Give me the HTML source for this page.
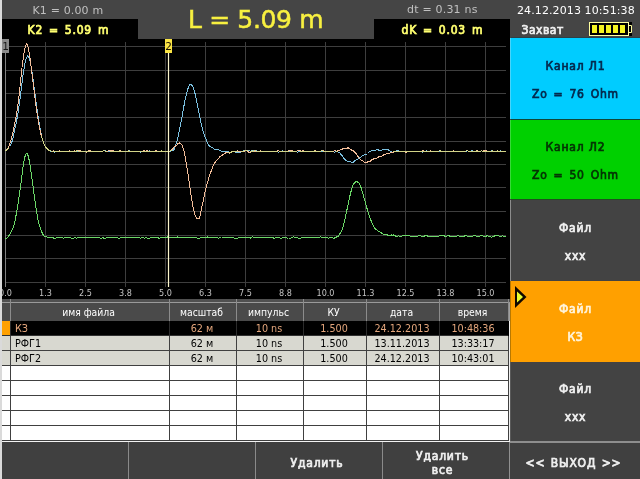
<!DOCTYPE html>
<html lang="ru"><head><meta charset="utf-8"><title>Рефлектометр</title>
<style>
html,body{margin:0;padding:0;}
body{-webkit-font-smoothing:antialiased;width:640px;height:479px;overflow:hidden;background:#454545;position:relative;font-family:"DejaVu Sans","Liberation Sans",sans-serif;}
div{position:absolute;white-space:nowrap;}
.strip{left:0;top:0;width:2px;height:479px;background:#dadada;z-index:5;}
.blk{background:#000;}
.k1{left:32.5px;top:3px;font-size:11px;line-height:16px;color:#c0c0c0;letter-spacing:0.15px;}
.k2{left:27.5px;top:22px;font-size:12px;line-height:16px;color:#ffff70;font-weight:normal;-webkit-text-stroke:0.7px;letter-spacing:0.8px;word-spacing:1.7px;font-family:"DejaVu Sans Condensed","DejaVu Sans","Liberation Sans",sans-serif;}
.big{left:188px;top:5px;font-size:25px;line-height:30px;color:#f8f040;letter-spacing:-0.35px;-webkit-text-stroke:0.5px;}
.dt{left:407px;top:2px;font-size:11px;line-height:16px;color:#c0c0c0;letter-spacing:0.2px;}
.dk{left:401.5px;top:22px;font-size:12px;line-height:16px;color:#ffff70;font-weight:normal;-webkit-text-stroke:0.7px;letter-spacing:0.8px;word-spacing:1.7px;font-family:"DejaVu Sans Condensed","DejaVu Sans","Liberation Sans",sans-serif;}
.date{left:517px;top:3px;font-size:11px;line-height:16px;color:#ffffff;letter-spacing:0.1px;}
.zah{left:521.5px;top:22px;font-size:12px;line-height:16px;color:#f0f0f0;font-weight:normal;-webkit-text-stroke:0.7px;letter-spacing:0.5px;font-family:"DejaVu Sans Condensed","DejaVu Sans","Liberation Sans",sans-serif;}
.ax{top:287px;font-size:9px;line-height:12px;color:#c4c4c4;text-align:center;font-family:"DejaVu Sans Condensed","DejaVu Sans","Liberation Sans",sans-serif;}
.btn{left:511px;width:129px;text-align:center;font-weight:normal;-webkit-text-stroke:0.7px;font-size:12px;line-height:16px;letter-spacing:0.8px;word-spacing:1.7px;font-family:"DejaVu Sans Condensed","DejaVu Sans","Liberation Sans",sans-serif;}
.btn span{position:absolute;left:0;width:129px;}
.th{top:303px;height:18px;line-height:18px;font-size:10.3px;color:#ffffff;text-align:center;font-family:"DejaVu Sans Condensed","DejaVu Sans","Liberation Sans",sans-serif;}
.td{height:15px;line-height:15px;font-size:10.7px;color:#000;text-align:center;font-family:"DejaVu Sans Condensed","DejaVu Sans","Liberation Sans",sans-serif;}
.td.sel{color:#e4a67c;}
.bb{top:443px;height:36px;color:#f0f0f0;font-weight:normal;-webkit-text-stroke:0.7px;letter-spacing:0.8px;font-size:12px;text-align:center;font-family:"DejaVu Sans Condensed","DejaVu Sans","Liberation Sans",sans-serif;}
</style></head><body>
<div id="root" style="left:0;top:0;width:640px;height:479px;will-change:transform">
<div class="strip"></div>

<!-- header -->
<div class="k1">K1 = 0.00 m</div>
<div class="blk" style="left:2px;top:19px;width:136px;height:21px"></div>
<div class="k2">K2 = 5.09 m</div>
<div class="big">L = 5.09 m</div>
<div class="dt">dt = 0.31 ns</div>
<div class="blk" style="left:374px;top:19px;width:136px;height:21px"></div>
<div class="dk">dK = 0.03 m</div>
<div class="date">24.12.2013 10:51:38</div>
<div class="zah">Захват</div>
<svg style="position:absolute;left:585px;top:18px" width="50" height="22" viewBox="585 18 50 22">
 <rect x="628" y="22" width="4" height="14" fill="#000"/>
 <rect x="589.5" y="22.5" width="39" height="13" fill="#000" stroke="#ffffa0" stroke-width="1"/>
 <path d="M628.5 25.5H631.5V32.5H628.5" fill="none" stroke="#ffffa0" stroke-width="1"/>
 <g fill="#f4f420"><rect x="592" y="25" width="5" height="8"/><rect x="599" y="25" width="5" height="8"/><rect x="606" y="25" width="5" height="8"/><rect x="613" y="25" width="5" height="8"/><rect x="620" y="25" width="5" height="8"/></g>
</svg>

<!-- graph -->
<div class="blk" style="left:2px;top:39px;width:508px;height:260px"></div>
<svg style="position:absolute;left:0;top:0" width="640" height="479" viewBox="0 0 640 479">
 <g stroke="#3e3e3e" stroke-width="1" shape-rendering="crispEdges"><line x1="5.5" y1="42" x2="5.5" y2="287"/><line x1="45.5" y1="42" x2="45.5" y2="287"/><line x1="85.5" y1="42" x2="85.5" y2="287"/><line x1="125.5" y1="42" x2="125.5" y2="287"/><line x1="165.5" y1="42" x2="165.5" y2="287"/><line x1="205.5" y1="42" x2="205.5" y2="287"/><line x1="245.5" y1="42" x2="245.5" y2="287"/><line x1="285.5" y1="42" x2="285.5" y2="287"/><line x1="325.5" y1="42" x2="325.5" y2="287"/><line x1="365.5" y1="42" x2="365.5" y2="287"/><line x1="405.5" y1="42" x2="405.5" y2="287"/><line x1="445.5" y1="42" x2="445.5" y2="287"/><line x1="485.5" y1="42" x2="485.5" y2="287"/><line x1="5" y1="46.5" x2="506" y2="46.5"/><line x1="5" y1="70.5" x2="506" y2="70.5"/><line x1="5" y1="93.5" x2="506" y2="93.5"/><line x1="5" y1="117.5" x2="506" y2="117.5"/><line x1="5" y1="141.5" x2="506" y2="141.5"/><line x1="5" y1="164.5" x2="506" y2="164.5"/><line x1="5" y1="187.5" x2="506" y2="187.5"/><line x1="5" y1="211.5" x2="506" y2="211.5"/><line x1="5" y1="235.5" x2="506" y2="235.5"/><line x1="5" y1="258.5" x2="506" y2="258.5"/><line x1="5" y1="282.5" x2="506" y2="282.5"/></g>
 <line x1="5.5" y1="53" x2="5.5" y2="287" stroke="#808080" stroke-width="1" shape-rendering="crispEdges"/>
 <g fill="none" stroke-width="1" stroke-linejoin="round" shape-rendering="crispEdges">
  <polyline stroke="#7cc2e2" points="5.5,151.0 6.5,150.7 7.5,149.7 8.5,148.2 9.5,146.5 10.5,144.7 11.5,143.0 12.5,140.1 13.5,135.5 14.5,130.7 15.5,126.3 16.5,121.4 17.5,115.9 18.5,109.8 19.5,103.3 20.5,95.6 21.5,87.5 22.5,79.3 23.5,71.8 24.5,65.6 25.5,60.3 26.5,57.5 27.5,55.9 28.5,56.4 29.5,59.3 30.5,62.8 31.5,68.4 32.5,75.5 33.5,83.2 34.5,90.8 35.5,97.9 36.5,105.3 37.5,112.5 38.5,119.3 39.5,125.5 40.5,130.9 41.5,136.0 42.5,139.9 43.5,142.6 44.5,144.9 45.5,147.0 46.5,148.2 47.5,149.1 48.5,150.3 49.5,151.0 50.5,151.0 51.5,151.3 52.5,151.4 53.5,151.6 54.5,152.1 55.5,151.8 56.5,151.3 57.5,151.4 58.5,151.6 59.5,151.6 60.5,151.7 61.5,151.7 62.5,151.9 63.5,151.9 64.5,151.5 65.5,151.4 66.5,151.4 67.5,151.3 68.5,151.1 69.5,151.2 70.5,151.5 71.5,151.9 72.5,151.8 73.5,151.2 74.5,151.2 75.5,151.3 76.5,151.0 77.5,151.1 78.5,151.6 79.5,151.9 80.5,151.8 81.5,151.5 82.5,151.3 83.5,151.6 84.5,151.8 85.5,151.6 86.5,151.4 87.5,151.5 88.5,151.5 89.5,151.3 90.5,151.2 91.5,151.3 92.5,151.5 93.5,151.8 94.5,151.8 95.5,151.7 96.5,151.6 97.5,151.6 98.5,151.7 99.5,151.7 100.5,151.5 101.5,151.3 102.5,151.2 103.5,150.8 104.5,150.7 105.5,151.0 106.5,151.2 107.5,151.7 108.5,152.0 109.5,151.5 110.5,151.2 111.5,151.5 112.5,151.6 113.5,151.5 114.5,151.5 115.5,151.7 116.5,151.6 117.5,151.3 118.5,151.3 119.5,151.4 120.5,151.3 121.5,151.3 122.5,151.4 123.5,151.7 124.5,151.7 125.5,151.5 126.5,151.3 127.5,151.1 128.5,150.8 129.5,151.0 130.5,151.2 131.5,151.1 132.5,151.2 133.5,151.2 134.5,151.4 135.5,151.5 136.5,151.6 137.5,151.4 138.5,151.3 139.5,151.8 140.5,152.1 141.5,151.6 142.5,151.4 143.5,151.3 144.5,151.4 145.5,151.6 146.5,151.5 147.5,151.3 148.5,151.2 149.5,151.0 150.5,151.2 151.5,151.6 152.5,151.8 153.5,151.7 154.5,151.5 155.5,151.3 156.5,151.2 157.5,151.3 158.5,151.4 159.5,151.4 160.5,151.2 161.5,151.0 162.5,151.3 163.5,151.8 164.5,151.4 165.5,151.2 166.5,151.6 167.5,151.7 168.5,151.3 169.5,151.2 170.5,151.0 171.5,150.8 172.5,150.9 173.5,150.5 174.5,148.8 175.5,145.9 176.5,142.6 177.5,139.1 178.5,134.8 179.5,129.9 180.5,125.1 181.5,119.8 182.5,113.8 183.5,108.3 184.5,103.0 185.5,97.9 186.5,93.9 187.5,90.2 188.5,87.0 189.5,85.1 190.5,84.2 191.5,84.8 192.5,86.4 193.5,88.3 194.5,91.3 195.5,95.5 196.5,100.4 197.5,105.7 198.5,110.7 199.5,115.7 200.5,120.8 201.5,125.4 202.5,129.2 203.5,132.8 204.5,135.9 205.5,138.2 206.5,140.5 207.5,142.7 208.5,144.6 209.5,146.3 210.5,147.0 211.5,147.0 212.5,147.6 213.5,148.6 214.5,149.1 215.5,149.7 216.5,150.0 217.5,149.7 218.5,149.8 219.5,150.6 220.5,151.0 221.5,151.1 222.5,151.2 223.5,151.1 224.5,151.1 225.5,151.4 226.5,151.4 227.5,151.5 228.5,152.0 229.5,152.3 230.5,152.2 231.5,152.0 232.5,151.8 233.5,151.8 234.5,151.9 235.5,152.1 236.5,152.1 237.5,152.2 238.5,152.5 239.5,152.4 240.5,152.0 241.5,151.8 242.5,151.6 243.5,151.0 244.5,150.4 245.5,150.4 246.5,150.6 247.5,150.6 248.5,150.6 249.5,150.8 250.5,151.2 251.5,150.9 252.5,150.6 253.5,150.6 254.5,150.4 255.5,150.3 256.5,151.1 257.5,151.8 258.5,151.5 259.5,151.1 260.5,151.2 261.5,151.7 262.5,151.7 263.5,151.5 264.5,151.5 265.5,151.6 266.5,151.8 267.5,151.8 268.5,151.5 269.5,151.3 270.5,151.4 271.5,151.5 272.5,151.5 273.5,151.3 274.5,151.3 275.5,151.3 276.5,151.4 277.5,152.0 278.5,152.1 279.5,151.7 280.5,151.7 281.5,151.4 282.5,150.9 283.5,151.2 284.5,151.5 285.5,151.4 286.5,151.2 287.5,151.3 288.5,151.6 289.5,151.8 290.5,151.8 291.5,151.8 292.5,151.8 293.5,151.5 294.5,151.1 295.5,151.2 296.5,151.8 297.5,152.1 298.5,152.0 299.5,151.8 300.5,151.7 301.5,151.5 302.5,151.4 303.5,151.4 304.5,151.7 305.5,152.0 306.5,151.9 307.5,151.5 308.5,151.2 309.5,151.5 310.5,151.9 311.5,151.9 312.5,151.5 313.5,151.3 314.5,151.1 315.5,151.4 316.5,151.7 317.5,151.5 318.5,151.4 319.5,151.4 320.5,151.3 321.5,151.0 322.5,151.1 323.5,151.4 324.5,151.5 325.5,151.5 326.5,151.8 327.5,152.0 328.5,151.5 329.5,151.3 330.5,151.5 331.5,151.4 332.5,151.3 333.5,151.8 334.5,152.1 335.5,151.8 336.5,151.6 337.5,151.7 338.5,152.1 339.5,152.6 340.5,153.7 341.5,155.1 342.5,156.1 343.5,157.6 344.5,159.1 345.5,160.0 346.5,160.8 347.5,161.6 348.5,161.7 349.5,161.7 350.5,161.8 351.5,162.3 352.5,162.6 353.5,162.0 354.5,161.0 355.5,160.3 356.5,159.9 357.5,159.4 358.5,158.6 359.5,157.9 360.5,157.2 361.5,156.5 362.5,155.9 363.5,155.3 364.5,154.8 365.5,154.5 366.5,154.3 367.5,153.5 368.5,152.5 369.5,151.8 370.5,151.4 371.5,150.8 372.5,150.6 373.5,151.0 374.5,150.9 375.5,150.2 376.5,149.7 377.5,149.8 378.5,150.0 379.5,150.5 380.5,150.8 381.5,150.3 382.5,149.7 383.5,149.6 384.5,149.8 385.5,149.8 386.5,149.7 387.5,149.7 388.5,150.0 389.5,150.6 390.5,151.1 391.5,151.1 392.5,151.0 393.5,151.1 394.5,151.2 395.5,151.1 396.5,150.9 397.5,150.7 398.5,150.9 399.5,151.3 400.5,151.5 401.5,151.6 402.5,151.5 403.5,151.0 404.5,151.0 405.5,151.5 406.5,151.6 407.5,151.6 408.5,151.8 409.5,151.5 410.5,151.1 411.5,151.2 412.5,151.7 413.5,151.5 414.5,151.2 415.5,151.7 416.5,152.0 417.5,151.9 418.5,151.5 419.5,151.2 420.5,151.5 421.5,152.0 422.5,152.0 423.5,151.8 424.5,151.6 425.5,151.2 426.5,151.0 427.5,151.3 428.5,151.5 429.5,151.4 430.5,151.7 431.5,151.6 432.5,151.2 433.5,151.2 434.5,151.3 435.5,151.3 436.5,151.2 437.5,151.2 438.5,151.2 439.5,151.0 440.5,151.0 441.5,151.4 442.5,151.5 443.5,151.2 444.5,151.2 445.5,151.2 446.5,151.3 447.5,151.5 448.5,151.7 449.5,151.7 450.5,151.5 451.5,151.5 452.5,151.4 453.5,151.3 454.5,151.5 455.5,151.6 456.5,151.6 457.5,151.4 458.5,151.2 459.5,151.3 460.5,151.6 461.5,151.6 462.5,151.4 463.5,151.1 464.5,151.1 465.5,151.3 466.5,151.0 467.5,150.8 468.5,151.4 469.5,151.6 470.5,151.1 471.5,150.9 472.5,151.0 473.5,151.1 474.5,151.3 475.5,151.2 476.5,151.3 477.5,151.5 478.5,151.4 479.5,151.4 480.5,151.1 481.5,150.8 482.5,151.1 483.5,151.7 484.5,151.7 485.5,151.5 486.5,151.5 487.5,151.5 488.5,151.8 489.5,151.9 490.5,151.3 491.5,150.8 492.5,150.8 493.5,151.1 494.5,151.6 495.5,151.7 496.5,151.2 497.5,150.9 498.5,151.4 499.5,151.4 500.5,151.0 501.5,151.1 502.5,151.4 503.5,151.5 504.5,151.3 505.5,151.3"/>
  <polyline stroke="#f4be9a" points="5.5,150.5 6.5,149.9 7.5,149.2 8.5,147.3 9.5,144.6 10.5,141.6 11.5,137.9 12.5,133.9 13.5,129.6 14.5,125.0 15.5,120.0 16.5,114.4 17.5,108.3 18.5,100.4 19.5,91.3 20.5,82.0 21.5,72.0 22.5,63.3 23.5,56.3 24.5,50.4 25.5,46.2 26.5,43.4 27.5,44.5 28.5,48.7 29.5,54.3 30.5,62.3 31.5,70.3 32.5,78.2 33.5,86.2 34.5,94.0 35.5,101.9 36.5,109.3 37.5,115.8 38.5,121.8 39.5,127.6 40.5,132.5 41.5,136.5 42.5,139.7 43.5,142.3 44.5,144.9 45.5,146.9 46.5,148.3 47.5,149.4 48.5,150.1 49.5,150.4 50.5,150.8 51.5,151.1 52.5,151.1 53.5,151.0 54.5,151.2 55.5,151.4 56.5,151.2 57.5,151.2 58.5,151.2 59.5,151.0 60.5,151.2 61.5,151.5 62.5,151.5 63.5,151.4 64.5,151.1 65.5,151.2 66.5,151.5 67.5,151.5 68.5,151.2 69.5,151.0 70.5,151.4 71.5,151.8 72.5,151.8 73.5,151.3 74.5,151.0 75.5,151.3 76.5,151.0 77.5,150.6 78.5,150.9 79.5,150.8 80.5,150.7 81.5,151.1 82.5,151.5 83.5,151.4 84.5,151.6 85.5,152.0 86.5,152.0 87.5,151.5 88.5,151.0 89.5,150.8 90.5,151.0 91.5,151.4 92.5,151.5 93.5,151.5 94.5,151.5 95.5,151.2 96.5,151.3 97.5,151.6 98.5,151.7 99.5,151.7 100.5,151.5 101.5,151.3 102.5,151.2 103.5,150.8 104.5,150.8 105.5,151.2 106.5,151.4 107.5,151.1 108.5,150.8 109.5,150.9 110.5,151.0 111.5,150.7 112.5,150.5 113.5,151.0 114.5,151.6 115.5,151.4 116.5,151.2 117.5,151.3 118.5,151.1 119.5,150.6 120.5,151.0 121.5,151.5 122.5,151.8 123.5,152.0 124.5,151.9 125.5,151.6 126.5,151.5 127.5,151.5 128.5,151.2 129.5,151.3 130.5,151.8 131.5,151.9 132.5,151.5 133.5,151.3 134.5,151.5 135.5,151.7 136.5,151.7 137.5,151.5 138.5,151.2 139.5,151.1 140.5,151.3 141.5,151.6 142.5,151.5 143.5,150.9 144.5,150.9 145.5,151.1 146.5,150.9 147.5,150.9 148.5,151.4 149.5,151.6 150.5,151.4 151.5,151.3 152.5,151.4 153.5,151.5 154.5,151.4 155.5,151.0 156.5,150.9 157.5,151.1 158.5,151.2 159.5,151.3 160.5,151.3 161.5,151.0 162.5,151.1 163.5,151.2 164.5,151.3 165.5,151.1 166.5,151.1 167.5,151.6 168.5,151.9 169.5,151.5 170.5,150.6 171.5,150.0 172.5,149.2 173.5,147.8 174.5,146.6 175.5,146.1 176.5,145.4 177.5,144.2 178.5,143.2 179.5,143.0 180.5,143.5 181.5,144.3 182.5,145.8 183.5,149.2 184.5,153.3 185.5,158.7 186.5,164.8 187.5,170.9 188.5,177.5 189.5,184.5 190.5,191.5 191.5,198.3 192.5,204.2 193.5,209.0 194.5,213.3 195.5,216.4 196.5,217.8 197.5,218.9 198.5,219.0 199.5,217.8 200.5,214.0 201.5,208.6 202.5,204.1 203.5,199.5 204.5,194.3 205.5,190.0 206.5,186.3 207.5,182.5 208.5,178.7 209.5,175.4 210.5,172.9 211.5,170.3 212.5,167.5 213.5,165.1 214.5,163.0 215.5,161.8 216.5,160.7 217.5,159.6 218.5,158.6 219.5,157.2 220.5,156.1 221.5,155.6 222.5,155.0 223.5,154.3 224.5,153.7 225.5,153.0 226.5,152.6 227.5,152.9 228.5,153.0 229.5,153.0 230.5,152.9 231.5,152.1 232.5,151.3 233.5,151.1 234.5,151.1 235.5,151.3 236.5,151.2 237.5,151.0 238.5,151.1 239.5,151.1 240.5,151.3 241.5,151.4 242.5,151.3 243.5,151.2 244.5,151.1 245.5,150.9 246.5,150.8 247.5,151.3 248.5,152.1 249.5,152.3 250.5,152.0 251.5,151.6 252.5,151.4 253.5,151.6 254.5,151.5 255.5,151.2 256.5,151.2 257.5,151.2 258.5,151.2 259.5,151.1 260.5,150.9 261.5,151.4 262.5,151.9 263.5,151.6 264.5,151.3 265.5,151.5 266.5,151.4 267.5,151.1 268.5,151.2 269.5,151.6 270.5,151.5 271.5,151.6 272.5,151.7 273.5,151.3 274.5,151.2 275.5,151.4 276.5,151.4 277.5,150.9 278.5,150.8 279.5,151.2 280.5,151.5 281.5,151.7 282.5,151.6 283.5,151.2 284.5,151.2 285.5,151.2 286.5,151.2 287.5,151.2 288.5,150.8 289.5,150.6 290.5,150.7 291.5,150.7 292.5,151.0 293.5,151.4 294.5,151.7 295.5,151.8 296.5,151.3 297.5,150.7 298.5,150.8 299.5,150.8 300.5,150.9 301.5,151.2 302.5,150.9 303.5,150.8 304.5,151.2 305.5,151.4 306.5,151.4 307.5,151.5 308.5,151.5 309.5,151.6 310.5,151.7 311.5,151.6 312.5,151.5 313.5,151.3 314.5,150.9 315.5,151.0 316.5,151.2 317.5,151.1 318.5,151.2 319.5,151.6 320.5,151.4 321.5,150.7 322.5,150.6 323.5,150.9 324.5,151.1 325.5,151.1 326.5,151.1 327.5,151.2 328.5,151.2 329.5,151.1 330.5,151.3 331.5,151.8 332.5,151.9 333.5,151.2 334.5,150.8 335.5,151.0 336.5,151.1 337.5,150.7 338.5,150.5 339.5,150.2 340.5,149.7 341.5,149.4 342.5,149.0 343.5,148.3 344.5,148.1 345.5,148.3 346.5,148.3 347.5,148.0 348.5,147.9 349.5,148.6 350.5,149.5 351.5,150.0 352.5,150.4 353.5,151.1 354.5,152.2 355.5,153.1 356.5,154.2 357.5,155.7 358.5,157.4 359.5,158.6 360.5,159.5 361.5,160.3 362.5,160.9 363.5,161.4 364.5,162.2 365.5,163.0 366.5,162.7 367.5,162.0 368.5,161.6 369.5,161.4 370.5,161.1 371.5,160.1 372.5,159.2 373.5,159.0 374.5,158.7 375.5,158.5 376.5,158.2 377.5,157.7 378.5,157.0 379.5,156.3 380.5,156.4 381.5,156.4 382.5,155.7 383.5,155.0 384.5,154.8 385.5,154.5 386.5,153.8 387.5,153.4 388.5,153.4 389.5,153.1 390.5,152.7 391.5,152.5 392.5,152.2 393.5,152.0 394.5,151.7 395.5,151.4 396.5,151.5 397.5,151.6 398.5,151.3 399.5,151.3 400.5,151.4 401.5,151.2 402.5,151.1 403.5,151.2 404.5,151.7 405.5,152.3 406.5,152.1 407.5,151.5 408.5,151.4 409.5,151.3 410.5,151.5 411.5,151.5 412.5,151.2 413.5,151.3 414.5,151.5 415.5,151.6 416.5,151.4 417.5,151.1 418.5,151.3 419.5,151.4 420.5,151.4 421.5,151.3 422.5,150.8 423.5,150.7 424.5,151.3 425.5,151.5 426.5,151.3 427.5,151.4 428.5,151.4 429.5,151.1 430.5,150.9 431.5,151.2 432.5,151.3 433.5,151.1 434.5,151.2 435.5,151.0 436.5,151.0 437.5,151.4 438.5,151.2 439.5,150.8 440.5,151.1 441.5,151.6 442.5,151.6 443.5,151.3 444.5,151.4 445.5,151.4 446.5,151.2 447.5,151.2 448.5,151.2 449.5,151.0 450.5,151.0 451.5,151.2 452.5,151.1 453.5,151.0 454.5,151.2 455.5,151.5 456.5,151.5 457.5,151.6 458.5,151.7 459.5,151.8 460.5,151.8 461.5,151.4 462.5,151.3 463.5,151.5 464.5,151.9 465.5,151.7 466.5,150.8 467.5,150.8 468.5,151.4 469.5,151.6 470.5,151.5 471.5,151.3 472.5,151.4 473.5,151.4 474.5,151.4 475.5,151.2 476.5,150.8 477.5,150.9 478.5,151.1 479.5,151.3 480.5,151.1 481.5,151.0 482.5,151.1 483.5,150.9 484.5,150.6 485.5,150.6 486.5,151.0 487.5,151.5 488.5,151.5 489.5,151.4 490.5,151.5 491.5,151.3 492.5,151.3 493.5,151.5 494.5,151.5 495.5,151.2 496.5,151.1 497.5,151.1 498.5,151.1 499.5,151.1 500.5,151.3 501.5,151.3 502.5,151.2 503.5,151.1 504.5,151.2 505.5,151.4"/>
  <path stroke="#d2d488" d="M5.5,150.7 L6.5,150.3 L7.5,149.4 L8.5,147.7 M41.5,136.2 L42.5,139.8 L43.5,142.4 L44.5,144.9 L45.5,146.9 L46.5,148.2 L47.5,149.2 L48.5,150.2 L49.5,150.7 L50.5,150.9 L51.5,151.2 L52.5,151.3 L53.5,151.3 L54.5,151.6 L55.5,151.6 L56.5,151.3 L57.5,151.3 L58.5,151.4 L59.5,151.3 L60.5,151.4 L61.5,151.6 L62.5,151.7 L63.5,151.6 L64.5,151.3 L65.5,151.3 L66.5,151.5 L67.5,151.4 L68.5,151.2 L69.5,151.1 L70.5,151.4 L71.5,151.9 L72.5,151.8 L73.5,151.2 L74.5,151.1 L75.5,151.3 L76.5,151.0 L77.5,150.9 L78.5,151.2 L79.5,151.3 L80.5,151.2 L81.5,151.3 L82.5,151.4 L83.5,151.5 L84.5,151.7 L85.5,151.8 L86.5,151.7 L87.5,151.5 L88.5,151.3 L89.5,151.1 L90.5,151.1 L91.5,151.3 L92.5,151.5 L93.5,151.7 L94.5,151.7 L95.5,151.4 L96.5,151.5 L97.5,151.6 L98.5,151.7 L99.5,151.7 L100.5,151.5 L101.5,151.3 L102.5,151.2 L103.5,150.8 L104.5,150.7 L105.5,151.1 L106.5,151.3 L107.5,151.4 M109.5,151.2 L110.5,151.1 L111.5,151.1 L112.5,151.1 L113.5,151.3 L114.5,151.5 L115.5,151.6 L116.5,151.4 L117.5,151.3 L118.5,151.2 L119.5,151.0 L120.5,151.1 L121.5,151.4 L122.5,151.6 L123.5,151.8 L124.5,151.8 L125.5,151.5 L126.5,151.4 L127.5,151.3 L128.5,151.0 L129.5,151.1 L130.5,151.5 L131.5,151.5 L132.5,151.4 L133.5,151.3 L134.5,151.4 L135.5,151.6 L136.5,151.6 L137.5,151.5 L138.5,151.2 L139.5,151.4 L140.5,151.7 L141.5,151.6 L142.5,151.4 L143.5,151.1 L144.5,151.1 L145.5,151.4 L146.5,151.2 L147.5,151.1 L148.5,151.3 L149.5,151.3 L150.5,151.3 L151.5,151.5 L152.5,151.6 L153.5,151.6 L154.5,151.5 L155.5,151.1 L156.5,151.1 L157.5,151.2 L158.5,151.3 L159.5,151.4 L160.5,151.2 L161.5,151.0 L162.5,151.2 L163.5,151.5 L164.5,151.4 L165.5,151.1 L166.5,151.4 L167.5,151.7 L168.5,151.6 L169.5,151.3 L170.5,150.8 L171.5,150.4 M228.5,152.5 L229.5,152.7 L230.5,152.6 L231.5,152.0 L232.5,151.6 L233.5,151.5 L234.5,151.5 L235.5,151.7 L236.5,151.6 L237.5,151.6 M240.5,151.6 L241.5,151.6 L242.5,151.4 L243.5,151.1 L244.5,150.8 L245.5,150.6 L246.5,150.7 L247.5,151.0 M250.5,151.6 L251.5,151.3 L252.5,151.0 L253.5,151.1 L254.5,150.9 L255.5,150.7 L256.5,151.2 L257.5,151.5 L258.5,151.4 L259.5,151.1 L260.5,151.1 L261.5,151.5 L262.5,151.8 L263.5,151.5 L264.5,151.4 L265.5,151.6 L266.5,151.6 L267.5,151.4 L268.5,151.4 L269.5,151.4 L270.5,151.5 L271.5,151.6 L272.5,151.6 L273.5,151.3 L274.5,151.2 L275.5,151.3 L276.5,151.4 L277.5,151.4 M279.5,151.4 L280.5,151.6 L281.5,151.6 L282.5,151.2 L283.5,151.2 L284.5,151.4 L285.5,151.3 L286.5,151.2 L287.5,151.2 L288.5,151.2 M290.5,151.2 L291.5,151.3 L292.5,151.4 L293.5,151.4 L294.5,151.4 L295.5,151.5 L296.5,151.5 M299.5,151.3 L300.5,151.3 L301.5,151.4 L302.5,151.2 L303.5,151.1 L304.5,151.4 L305.5,151.7 L306.5,151.6 L307.5,151.5 L308.5,151.4 L309.5,151.5 L310.5,151.8 L311.5,151.8 L312.5,151.5 L313.5,151.3 L314.5,151.0 L315.5,151.2 L316.5,151.4 L317.5,151.3 L318.5,151.3 L319.5,151.5 L320.5,151.3 L321.5,150.9 L322.5,150.8 L323.5,151.1 L324.5,151.3 L325.5,151.3 L326.5,151.4 L327.5,151.6 L328.5,151.4 L329.5,151.2 L330.5,151.4 L331.5,151.6 L332.5,151.6 L333.5,151.5 M335.5,151.4 L336.5,151.3 L337.5,151.2 M393.5,151.6 L394.5,151.4 L395.5,151.2 L396.5,151.2 L397.5,151.2 L398.5,151.1 L399.5,151.3 L400.5,151.4 L401.5,151.4 L402.5,151.3 L403.5,151.1 L404.5,151.4 L405.5,151.9 L406.5,151.8 L407.5,151.6 L408.5,151.6 L409.5,151.4 L410.5,151.3 L411.5,151.3 L412.5,151.4 L413.5,151.4 L414.5,151.4 L415.5,151.6 L416.5,151.7 L417.5,151.5 L418.5,151.4 L419.5,151.3 L420.5,151.4 L421.5,151.6 L422.5,151.4 L423.5,151.2 L424.5,151.4 L425.5,151.4 L426.5,151.2 L427.5,151.3 L428.5,151.5 L429.5,151.3 L430.5,151.3 L431.5,151.4 L432.5,151.3 L433.5,151.2 L434.5,151.3 L435.5,151.2 L436.5,151.1 L437.5,151.3 L438.5,151.2 L439.5,150.9 L440.5,151.0 L441.5,151.5 L442.5,151.6 L443.5,151.3 L444.5,151.3 L445.5,151.3 L446.5,151.2 L447.5,151.4 L448.5,151.4 L449.5,151.4 L450.5,151.3 L451.5,151.3 L452.5,151.3 L453.5,151.2 L454.5,151.3 L455.5,151.5 L456.5,151.6 L457.5,151.5 L458.5,151.5 L459.5,151.6 L460.5,151.7 L461.5,151.5 L462.5,151.3 L463.5,151.3 L464.5,151.5 L465.5,151.5 L466.5,150.9 L467.5,150.8 L468.5,151.4 L469.5,151.6 L470.5,151.3 L471.5,151.1 L472.5,151.2 L473.5,151.3 L474.5,151.4 L475.5,151.2 L476.5,151.0 L477.5,151.2 L478.5,151.3 L479.5,151.3 L480.5,151.1 L481.5,150.9 L482.5,151.1 L483.5,151.3 L484.5,151.2 L485.5,151.1 L486.5,151.3 L487.5,151.5 L488.5,151.7 L489.5,151.7 L490.5,151.4 L491.5,151.1 L492.5,151.0 L493.5,151.3 L494.5,151.6 L495.5,151.5 L496.5,151.1 L497.5,151.0 L498.5,151.2 L499.5,151.3 L500.5,151.1 L501.5,151.2 L502.5,151.3 L503.5,151.3 L504.5,151.3 L505.5,151.3"/>
  <polyline stroke="#6cd868" points="5.5,238.8 6.5,238.3 7.5,237.4 8.5,236.2 9.5,234.7 10.5,232.6 11.5,230.8 12.5,229.1 13.5,226.7 14.5,223.6 15.5,218.5 16.5,212.6 17.5,206.9 18.5,200.9 19.5,194.3 20.5,186.8 21.5,178.7 22.5,170.8 23.5,164.0 24.5,158.2 25.5,155.0 26.5,153.3 27.5,154.0 28.5,157.0 29.5,161.8 30.5,168.5 31.5,175.0 32.5,182.0 33.5,189.6 34.5,197.4 35.5,204.4 36.5,211.2 37.5,217.3 38.5,222.2 39.5,225.7 40.5,228.7 41.5,231.4 42.5,233.6 43.5,235.2 44.5,236.3 45.5,236.9 46.5,236.8 47.5,237.1 48.5,237.6 49.5,237.6 50.5,237.5 51.5,237.5 52.5,237.4 53.5,238.0 54.5,238.6 55.5,238.3 56.5,237.6 57.5,237.4 58.5,237.7 59.5,237.9 60.5,237.6 61.5,237.6 62.5,238.0 63.5,238.1 64.5,237.7 65.5,237.3 66.5,237.2 67.5,237.2 68.5,237.2 69.5,237.6 70.5,237.8 71.5,238.1 72.5,238.5 73.5,238.2 74.5,237.8 75.5,238.0 76.5,238.1 77.5,237.6 78.5,237.5 79.5,237.5 80.5,237.6 81.5,237.7 82.5,237.2 83.5,237.2 84.5,237.6 85.5,237.7 86.5,237.8 87.5,237.9 88.5,237.9 89.5,237.8 90.5,237.4 91.5,237.4 92.5,237.6 93.5,237.8 94.5,237.8 95.5,237.5 96.5,237.6 97.5,238.0 98.5,237.9 99.5,237.9 100.5,238.5 101.5,238.4 102.5,237.8 103.5,238.0 104.5,238.6 105.5,238.3 106.5,237.9 107.5,237.7 108.5,237.6 109.5,237.6 110.5,237.7 111.5,237.9 112.5,237.7 113.5,237.5 114.5,237.4 115.5,237.5 116.5,237.5 117.5,237.8 118.5,238.1 119.5,238.1 120.5,238.0 121.5,237.9 122.5,237.8 123.5,237.7 124.5,237.8 125.5,237.8 126.5,237.8 127.5,238.0 128.5,237.8 129.5,237.5 130.5,237.5 131.5,237.5 132.5,237.6 133.5,237.7 134.5,237.8 135.5,237.4 136.5,237.0 137.5,237.0 138.5,237.1 139.5,237.6 140.5,238.1 141.5,237.9 142.5,237.4 143.5,237.6 144.5,238.1 145.5,238.0 146.5,237.9 147.5,238.3 148.5,238.6 149.5,238.3 150.5,237.9 151.5,237.9 152.5,237.8 153.5,237.5 154.5,237.4 155.5,237.4 156.5,237.4 157.5,237.6 158.5,238.0 159.5,238.2 160.5,237.7 161.5,237.5 162.5,237.7 163.5,237.9 164.5,237.9 165.5,237.6 166.5,237.2 167.5,237.0 168.5,237.3 169.5,237.7 170.5,237.6 171.5,237.3 172.5,237.4 173.5,237.7 174.5,237.7 175.5,237.5 176.5,237.3 177.5,237.0 178.5,237.3 179.5,237.6 180.5,237.2 181.5,237.3 182.5,237.6 183.5,237.4 184.5,237.4 185.5,237.5 186.5,237.6 187.5,237.4 188.5,237.1 189.5,237.2 190.5,237.3 191.5,237.4 192.5,237.7 193.5,237.9 194.5,237.8 195.5,237.7 196.5,237.9 197.5,238.2 198.5,238.2 199.5,238.1 200.5,237.7 201.5,237.6 202.5,237.6 203.5,237.4 204.5,237.4 205.5,237.4 206.5,237.2 207.5,237.0 208.5,237.2 209.5,237.6 210.5,237.9 211.5,237.9 212.5,237.7 213.5,237.4 214.5,237.4 215.5,237.6 216.5,237.7 217.5,237.9 218.5,238.1 219.5,237.6 220.5,237.1 221.5,237.0 222.5,237.0 223.5,237.3 224.5,237.8 225.5,237.6 226.5,237.3 227.5,237.7 228.5,238.0 229.5,237.6 230.5,237.3 231.5,237.5 232.5,237.7 233.5,237.9 234.5,238.1 235.5,238.2 236.5,238.2 237.5,238.2 238.5,237.7 239.5,237.3 240.5,237.4 241.5,237.6 242.5,237.7 243.5,237.7 244.5,237.5 245.5,237.5 246.5,237.9 247.5,238.0 248.5,237.9 249.5,238.0 250.5,238.0 251.5,237.5 252.5,236.9 253.5,237.1 254.5,237.3 255.5,237.3 256.5,237.7 257.5,237.9 258.5,237.5 259.5,237.5 260.5,237.9 261.5,237.6 262.5,237.3 263.5,237.6 264.5,237.6 265.5,237.6 266.5,237.6 267.5,237.5 268.5,237.3 269.5,237.6 270.5,237.7 271.5,237.6 272.5,237.6 273.5,238.0 274.5,238.2 275.5,237.9 276.5,237.9 277.5,237.7 278.5,237.7 279.5,237.9 280.5,238.1 281.5,238.1 282.5,237.8 283.5,237.4 284.5,237.5 285.5,237.7 286.5,238.0 287.5,238.1 288.5,238.0 289.5,238.1 290.5,238.1 291.5,237.6 292.5,237.1 293.5,236.9 294.5,237.3 295.5,237.7 296.5,237.7 297.5,237.9 298.5,238.1 299.5,238.2 300.5,238.1 301.5,237.7 302.5,237.5 303.5,237.6 304.5,237.6 305.5,237.5 306.5,237.7 307.5,237.8 308.5,237.4 309.5,237.3 310.5,237.4 311.5,237.6 312.5,237.8 313.5,237.8 314.5,237.6 315.5,237.4 316.5,237.6 317.5,237.6 318.5,237.7 319.5,237.4 320.5,236.8 321.5,237.1 322.5,237.7 323.5,238.0 324.5,237.8 325.5,237.5 326.5,237.4 327.5,237.9 328.5,238.2 329.5,237.7 330.5,237.3 331.5,237.2 332.5,237.8 333.5,238.3 334.5,238.0 335.5,237.6 336.5,237.0 337.5,236.6 338.5,236.0 339.5,234.5 340.5,232.8 341.5,231.1 342.5,228.4 343.5,225.0 344.5,221.2 345.5,216.6 346.5,211.9 347.5,207.4 348.5,202.4 349.5,197.5 350.5,193.5 351.5,189.7 352.5,186.4 353.5,184.3 354.5,182.8 355.5,181.9 356.5,181.7 357.5,182.0 358.5,182.5 359.5,183.9 360.5,186.1 361.5,188.9 362.5,192.4 363.5,196.1 364.5,199.4 365.5,202.7 366.5,206.4 367.5,210.4 368.5,213.7 369.5,216.2 370.5,219.1 371.5,222.0 372.5,224.2 373.5,226.1 374.5,228.0 375.5,229.3 376.5,229.8 377.5,230.8 378.5,231.7 379.5,231.9 380.5,232.1 381.5,232.9 382.5,233.9 383.5,234.1 384.5,234.1 385.5,234.6 386.5,234.7 387.5,235.0 388.5,235.4 389.5,235.4 390.5,235.1 391.5,235.0 392.5,235.2 393.5,235.0 394.5,235.1 395.5,236.0 396.5,236.3 397.5,236.1 398.5,235.9 399.5,236.2 400.5,236.5 401.5,236.4 402.5,235.9 403.5,235.5 404.5,235.4 405.5,235.1 406.5,235.3 407.5,235.6 408.5,235.7 409.5,235.8 410.5,236.2 411.5,236.6 412.5,236.6 413.5,236.3 414.5,236.3 415.5,236.0 416.5,236.0 417.5,236.1 418.5,235.9 419.5,235.7 420.5,235.8 421.5,236.2 422.5,236.5 423.5,236.2 424.5,236.0 425.5,235.8 426.5,235.6 427.5,235.9 428.5,236.7 429.5,237.0 430.5,236.5 431.5,236.2 432.5,236.2 433.5,236.3 434.5,236.4 435.5,236.4 436.5,236.4 437.5,236.3 438.5,236.1 439.5,235.8 440.5,235.7 441.5,235.7 442.5,235.8 443.5,235.9 444.5,236.0 445.5,236.2 446.5,236.1 447.5,235.8 448.5,235.7 449.5,236.0 450.5,236.5 451.5,236.8 452.5,236.6 453.5,236.4 454.5,236.3 455.5,236.2 456.5,236.3 457.5,235.9 458.5,235.8 459.5,236.7 460.5,236.8 461.5,236.2 462.5,236.1 463.5,236.2 464.5,236.0 465.5,235.8 466.5,235.9 467.5,236.3 468.5,236.5 469.5,236.5 470.5,236.7 471.5,236.7 472.5,236.3 473.5,235.9 474.5,235.6 475.5,235.8 476.5,236.3 477.5,236.2 478.5,236.2 479.5,236.1 480.5,235.9 481.5,235.9 482.5,236.0 483.5,236.1 484.5,236.4 485.5,236.4 486.5,236.0 487.5,235.9 488.5,236.1 489.5,236.3 490.5,236.8 491.5,237.1 492.5,236.7 493.5,236.3 494.5,236.0 495.5,235.9 496.5,235.7 497.5,235.8 498.5,235.9 499.5,236.1 500.5,236.3 501.5,236.2 502.5,235.9 503.5,236.1 504.5,236.5 505.5,236.5"/>
 </g>
 <line x1="168.5" y1="53" x2="168.5" y2="287" stroke="#fcf6cc" stroke-width="1.2"/>
 <rect x="2" y="39" width="7" height="14" fill="#8a8a8a"/>
 <rect x="165" y="39" width="7" height="14" fill="#fae444"/>
 <g font-family="DejaVu Sans, sans-serif" font-size="10.5" text-anchor="middle">
  <text x="5.5" y="50" fill="#181818">1</text>
  <text x="168.5" y="50" fill="#181000">2</text>
 </g>
</svg>
<div class="ax" style="left:2px;width:30px;text-align:left;text-indent:-3px">0.0</div><div class="ax" style="left:25.5px;width:40px">1.3</div><div class="ax" style="left:65.5px;width:40px">2.5</div><div class="ax" style="left:105.5px;width:40px">3.8</div><div class="ax" style="left:145.5px;width:40px">5.0</div><div class="ax" style="left:185.5px;width:40px">6.3</div><div class="ax" style="left:225.5px;width:40px">7.5</div><div class="ax" style="left:265.5px;width:40px">8.8</div><div class="ax" style="left:305.5px;width:40px">10.0</div><div class="ax" style="left:345.5px;width:40px">11.3</div><div class="ax" style="left:385.5px;width:40px">12.5</div><div class="ax" style="left:425.5px;width:40px">13.8</div><div class="ax" style="left:465.5px;width:40px">15.0</div>

<!-- right panel -->
<div style="left:510px;top:38px;width:1px;height:81px;background:#48d4fa"></div>
<div style="left:510px;top:120px;width:1px;height:79px;background:#38d838"></div>
<div style="left:510px;top:200px;width:1px;height:81px;background:#8c8c8c"></div>
<div style="left:510px;top:281px;width:1px;height:81px;background:#b87800"></div>
<div style="left:510px;top:362px;width:1px;height:79px;background:#5a5a5a"></div>
<div style="left:511px;top:37px;width:129px;height:1px;background:#2c4048"></div>
<div class="btn" style="top:38px;height:81px;background:#00ccff;color:#04284c"><span style="top:20px;word-spacing:0.2px">Канал Л1</span><span style="top:48px">Zo = 76 Ohm</span></div>
<div style="left:511px;top:119px;width:129px;height:1px;background:#104838"></div>
<div class="btn" style="top:120px;height:79px;background:#00d000;color:#043404"><span style="top:19px;word-spacing:0.2px">Канал Л2</span><span style="top:47px">Zo = 50 Ohm</span></div>
<div style="left:511px;top:199px;width:129px;height:1px;background:#205020"></div>
<div class="btn" style="top:200px;height:81px;background:#434343;color:#f0f0f0"><span style="top:20px">Файл</span><span style="top:48px">xxx</span></div>
<div class="btn" style="top:281px;height:81px;background:#ffa000;color:#fff4dc"><span style="top:20px">Файл</span><span style="top:48px">КЗ</span></div>
<div class="btn" style="top:362px;height:80px;background:#434343;color:#f0f0f0"><span style="top:19px">Файл</span><span style="top:47px">xxx</span></div>
<svg style="position:absolute;left:512px;top:284px" width="18" height="26" viewBox="512 284 18 26">
 <polygon points="515,286 526.5,297 515,308" fill="#100800"/>
 <polygon points="517,291.5 523,297 517,302.5" fill="#e8ff30"/>
</svg>

<!-- table -->
<div style="left:2px;top:299px;width:508px;height:3px;background:#505050"></div>
<div style="left:2px;top:302px;width:508px;height:1px;background:#9a9a9a"></div>
<div style="left:2px;top:303px;width:508px;height:18px;background:#4a4a4a"></div>
<div style="left:2px;top:321px;width:508px;height:121px;background:#ffffff"></div>
<div style="left:2px;top:321px;width:508px;height:15px;background:#000"></div>
<div style="left:2px;top:336px;width:508px;height:30px;background:#d8d8d0"></div>
<div style="left:2px;top:321px;width:8px;height:15px;background:#ffa000"></div>
<!-- horizontal lines -->
<div style="left:2px;top:335px;width:508px;height:1px;background:#303030"></div>
<div style="left:2px;top:350px;width:508px;height:1px;background:#404040"></div>
<div style="left:2px;top:365px;width:508px;height:1px;background:#404040"></div>
<div style="left:2px;top:380px;width:508px;height:1px;background:#404040"></div>
<div style="left:2px;top:395px;width:508px;height:1px;background:#404040"></div>
<div style="left:2px;top:410px;width:508px;height:1px;background:#404040"></div>
<div style="left:2px;top:425px;width:508px;height:1px;background:#404040"></div>
<div style="left:2px;top:440px;width:508px;height:1px;background:#404040"></div>
<!-- vertical lines: header (lighter) and body (dark) -->
<div style="left:10px;top:299px;width:1px;height:22px;background:#8c8c8c"></div><div style="left:10px;top:321px;width:1px;height:14px;background:#2c2c2c"></div><div style="left:10px;top:336px;width:1px;height:105px;background:#404040"></div><div style="left:169px;top:299px;width:1px;height:22px;background:#8c8c8c"></div><div style="left:169px;top:321px;width:1px;height:14px;background:#2c2c2c"></div><div style="left:169px;top:336px;width:1px;height:105px;background:#404040"></div><div style="left:236px;top:299px;width:1px;height:22px;background:#8c8c8c"></div><div style="left:236px;top:321px;width:1px;height:14px;background:#2c2c2c"></div><div style="left:236px;top:336px;width:1px;height:105px;background:#404040"></div><div style="left:303px;top:299px;width:1px;height:22px;background:#8c8c8c"></div><div style="left:303px;top:321px;width:1px;height:14px;background:#2c2c2c"></div><div style="left:303px;top:336px;width:1px;height:105px;background:#404040"></div><div style="left:366px;top:299px;width:1px;height:22px;background:#8c8c8c"></div><div style="left:366px;top:321px;width:1px;height:14px;background:#2c2c2c"></div><div style="left:366px;top:336px;width:1px;height:105px;background:#404040"></div><div style="left:439px;top:299px;width:1px;height:22px;background:#8c8c8c"></div><div style="left:439px;top:321px;width:1px;height:14px;background:#2c2c2c"></div><div style="left:439px;top:336px;width:1px;height:105px;background:#404040"></div><div style="left:508px;top:299px;width:1px;height:22px;background:#8c8c8c"></div><div style="left:508px;top:321px;width:1px;height:14px;background:#2c2c2c"></div><div style="left:508px;top:336px;width:1px;height:105px;background:#404040"></div>
<div style="left:508px;top:321px;width:1px;height:15px;background:#000"></div>
<div style="left:509px;top:303px;width:1px;height:18px;background:#a0a0a0"></div>
<div style="left:509px;top:321px;width:1px;height:121px;background:#f0f0f0"></div>
<div class="th" style="left:11px;width:155px">имя файла</div><div class="th" style="left:170px;width:63px">масштаб</div><div class="th" style="left:237px;width:63px">импульс</div><div class="th" style="left:304px;width:59px">КУ</div><div class="th" style="left:367px;width:69px">дата</div><div class="th" style="left:440px;width:65px">время</div><div class="td sel" style="left:11px;width:156px;top:321px;text-align:left;padding-left:4px;box-sizing:border-box">КЗ</div><div class="td sel" style="left:170px;width:64px;top:321px">62 м</div><div class="td sel" style="left:237px;width:64px;top:321px">10 ns</div><div class="td sel" style="left:304px;width:60px;top:321px">1.500</div><div class="td sel" style="left:367px;width:70px;top:321px">24.12.2013</div><div class="td sel" style="left:440px;width:66px;top:321px">10:48:36</div><div class="td" style="left:11px;width:156px;top:336px;text-align:left;padding-left:4px;box-sizing:border-box">РФГ1</div><div class="td" style="left:170px;width:64px;top:336px">62 м</div><div class="td" style="left:237px;width:64px;top:336px">10 ns</div><div class="td" style="left:304px;width:60px;top:336px">1.500</div><div class="td" style="left:367px;width:70px;top:336px">13.11.2013</div><div class="td" style="left:440px;width:66px;top:336px">13:33:17</div><div class="td" style="left:11px;width:156px;top:351px;text-align:left;padding-left:4px;box-sizing:border-box">РФГ2</div><div class="td" style="left:170px;width:64px;top:351px">62 м</div><div class="td" style="left:237px;width:64px;top:351px">10 ns</div><div class="td" style="left:304px;width:60px;top:351px">1.500</div><div class="td" style="left:367px;width:70px;top:351px">24.12.2013</div><div class="td" style="left:440px;width:66px;top:351px">10:43:01</div>

<!-- bottom bar -->
<div style="left:2px;top:441px;width:508px;height:1px;background:#f4f4f4"></div>
<div style="left:510px;top:441px;width:130px;height:2px;background:#8e8e8e"></div>
<div style="left:2px;top:442px;width:507px;height:37px;background:#404040"></div>
<div style="left:510px;top:443px;width:130px;height:36px;background:#404040"></div>
<div style="left:128px;top:442px;width:1px;height:37px;background:#8a8a8a"></div>
<div style="left:255px;top:442px;width:1px;height:37px;background:#8a8a8a"></div>
<div style="left:382px;top:442px;width:1px;height:37px;background:#8a8a8a"></div>
<div style="left:509px;top:442px;width:1px;height:37px;background:#909090"></div>
<div class="bb" style="left:254px;width:126px;line-height:40px">Удалить</div>
<div class="bb" style="left:379px;width:127px;line-height:14px;padding-top:6px">Удалить<br>все</div>
<div class="bb" style="left:509px;width:129px;line-height:40px;word-spacing:1.4px">&lt;&lt; ВЫХОД &gt;&gt;</div>
</div>
</body></html>
